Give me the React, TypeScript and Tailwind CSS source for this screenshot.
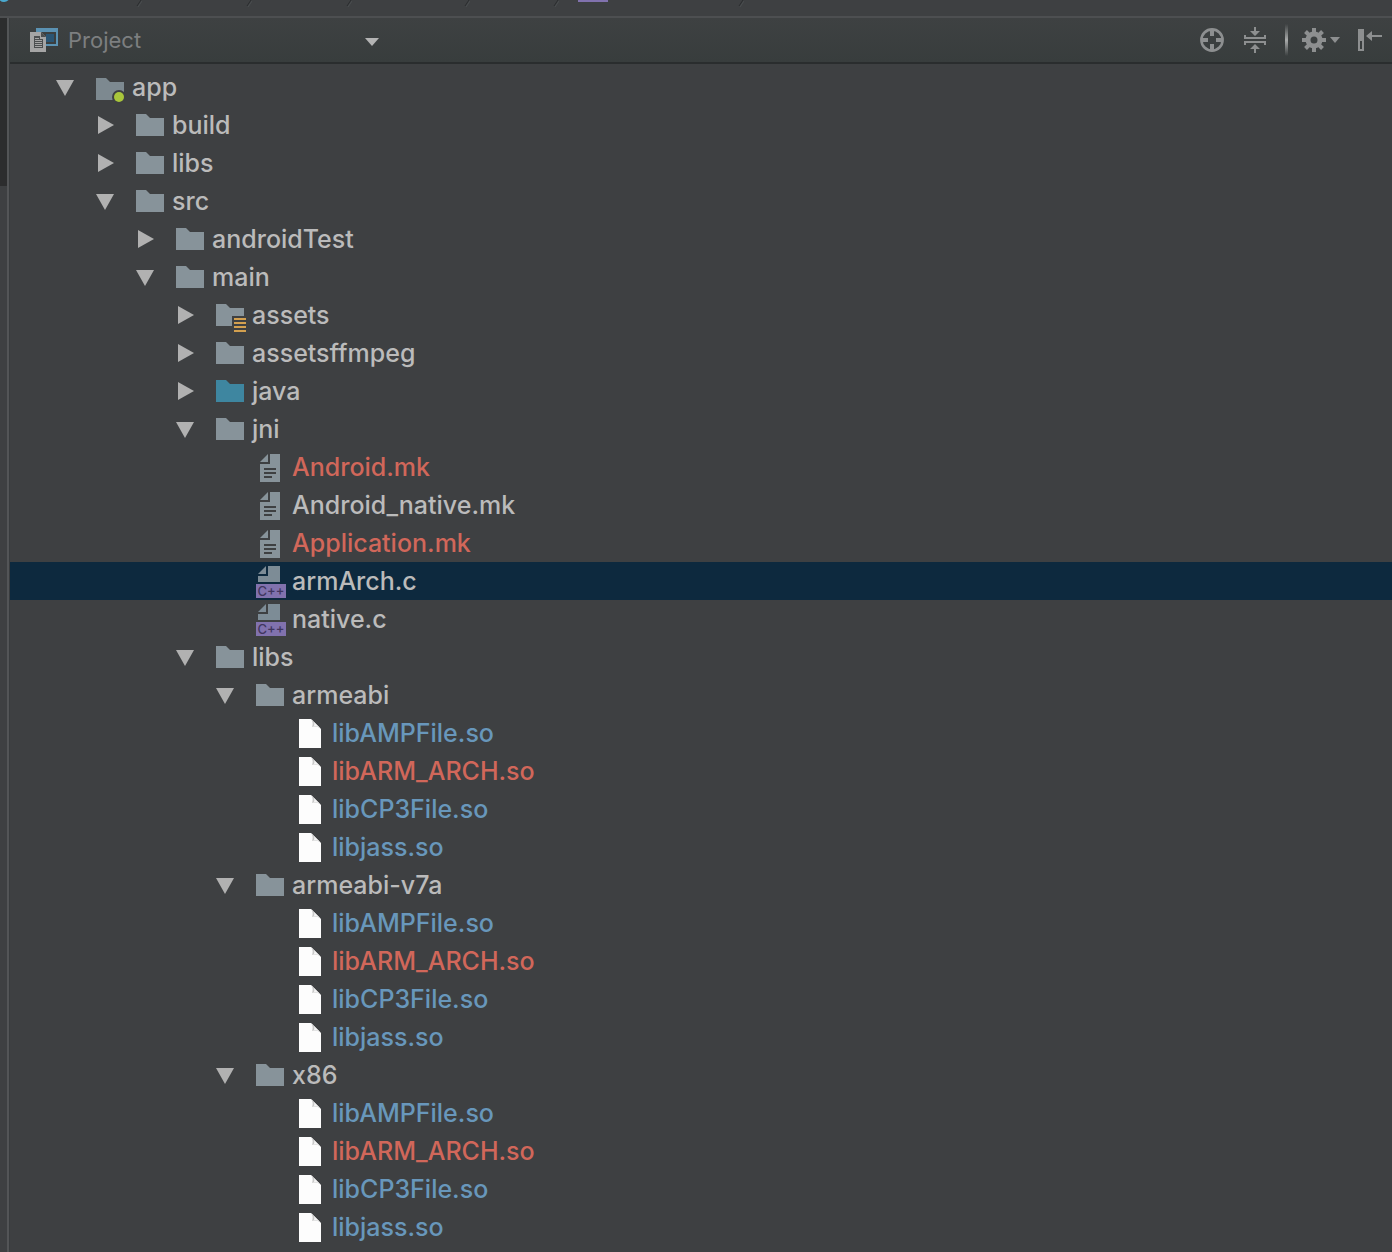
import { useState } from "react";
import clsx from "clsx";

type IconKind = "module" | "folder" | "assets" | "source" | "text" | "cpp" | "blank";
type Status = "normal" | "added" | "unversioned";

interface TreeItem {
	id: string;
	name: string;
	icon: IconKind;
	status?: Status;
	children?: TreeItem[];
}

const soFiles = (parent: string): TreeItem[] => [
	{ id: `${parent}/libAMPFile.so`, name: "libAMPFile.so", icon: "blank", status: "added" },
	{ id: `${parent}/libARM_ARCH.so`, name: "libARM_ARCH.so", icon: "blank", status: "unversioned" },
	{ id: `${parent}/libCP3File.so`, name: "libCP3File.so", icon: "blank", status: "added" },
	{ id: `${parent}/libjass.so`, name: "libjass.so", icon: "blank", status: "added" },
];

const project: TreeItem[] = [
	{
		id: "app", name: "app", icon: "module", children: [
			{ id: "build", name: "build", icon: "folder", children: [] },
			{ id: "libs", name: "libs", icon: "folder", children: [] },
			{
				id: "src", name: "src", icon: "folder", children: [
					{ id: "androidTest", name: "androidTest", icon: "folder", children: [] },
					{
						id: "main", name: "main", icon: "folder", children: [
							{ id: "assets", name: "assets", icon: "assets", children: [] },
							{ id: "assetsffmpeg", name: "assetsffmpeg", icon: "folder", children: [] },
							{ id: "java", name: "java", icon: "source", children: [] },
							{
								id: "jni", name: "jni", icon: "folder", children: [
									{ id: "Android.mk", name: "Android.mk", icon: "text", status: "unversioned" },
									{ id: "Android_native.mk", name: "Android_native.mk", icon: "text" },
									{ id: "Application.mk", name: "Application.mk", icon: "text", status: "unversioned" },
									{ id: "armArch.c", name: "armArch.c", icon: "cpp" },
									{ id: "native.c", name: "native.c", icon: "cpp" },
								],
							},
							{
								id: "main/libs", name: "libs", icon: "folder", children: [
									{ id: "armeabi", name: "armeabi", icon: "folder", children: soFiles("armeabi") },
									{ id: "armeabi-v7a", name: "armeabi-v7a", icon: "folder", children: soFiles("armeabi-v7a") },
									{ id: "x86", name: "x86", icon: "folder", children: soFiles("x86") },
								],
							},
						],
					},
				],
			},
		],
	},
];

const initiallyOpen = ["app", "src", "main", "jni", "main/libs", "armeabi", "armeabi-v7a", "x86"];

const statusColors: Record<Status, string> = {
	normal: "text-[#bbbbbb]",
	added: "text-[#6897bb]",
	unversioned: "text-[#d1675a]",
};

// Icons are drawn on the full row height
const ItemIcon = ({ kind }: { kind: IconKind }) => (
	<svg width="32" height="38" viewBox="0 0 32 38" className="shrink-0" aria-hidden="true">
		{kind === "folder" && <path d="M0 8h10l4 4h14v18H0z" fill="#87939a" />}
		{kind === "source" && <path d="M0 8h10l4 4h14v18H0z" fill="#3e86a0" />}
		{kind === "module" && (
			<>
				<path d="M0 10h10l4 4h14v18H0z" fill="#7d8990" />
				<circle cx="23" cy="29" r="7" fill="#3e4042" />
				<circle cx="23" cy="29" r="5" fill="#a9c63b" />
			</>
		)}
		{kind === "assets" && (
			<>
				<path d="M0 8h10l4 4h14v8H16v10H0z" fill="#87939a" />
				<path d="M18 22h12v2H18zM18 26h12v2H18zM18 30h12v2H18zM18 34h12v2H18z" fill="#d3a04f" />
			</>
		)}
		{kind === "text" && (
			<>
				<path d="M4 14l8-8v8zM14 6h10v28H4V16h10z" fill="#87939a" />
				<path d="M8 20h12v2H8zM8 24h12v2H8zM8 28h8v2H8z" fill="#3e4042" />
			</>
		)}
		{kind === "cpp" && (
			<>
				<path d="M2 12l8-8v8zM12 4h12v16H2v-6h10z" fill="#7d8c96" />
				<path d="M0 22h30v14H0z" fill="#8172ae" />
				<text x="15" y="34" textAnchor="middle" fill="#40365f" fontSize="13" fontWeight="500" fontFamily="Inter, sans-serif">C++</text>
			</>
		)}
		{kind === "blank" && (
			<>
				<path d="M3 5h12l10 10v19H3z" fill="#fdfdfd" />
				<path d="M15 5c2 3 2 5 1 8 4-1 7 0 9 2z" fill="#c9c9c9" />
				<path d="M15 5c3 2 4 4 3 7 3 0 5 1 7 3z" fill="#f4f4f4" />
			</>
		)}
	</svg>
);

const Arrow = ({ open }: { open: boolean }) => (
	<svg width="20" height="20" viewBox="0 0 20 20" fill="#b1b1b1" aria-hidden="true">
		<path d={open ? "M0 3h18L9 19z" : "M2 1l16 9-16 9z"} />
	</svg>
);

interface RowProps {
	item: TreeItem;
	depth: number;
	open: string[];
	selected: string;
	onToggle: (id: string) => void;
	onSelect: (id: string) => void;
}

const TreeRow = ({ item, depth, open, selected, onToggle, onSelect }: RowProps) => {
	const isOpen = open.includes(item.id);
	const isSelected = selected === item.id;

	return (
		<li role="treeitem" aria-expanded={item.children ? isOpen : undefined} aria-selected={isSelected}>
			<div
				className={clsx("flex h-[38px] items-center", isSelected && "bg-[#0d293e]")}
				style={{ paddingLeft: 46 + depth * 40 }}
			>
				<div className="mr-5 w-5 shrink-0">
					{item.children && (
						<button type="button" className="block" aria-label={`Toggle ${item.name}`} onClick={() => onToggle(item.id)}>
							<Arrow open={isOpen} />
						</button>
					)}
				</div>
				<button type="button" className="flex grow items-center gap-1 text-left" onClick={() => onSelect(item.id)}>
					<ItemIcon kind={item.icon} />
					<span className={clsx("whitespace-nowrap font-medium", statusColors[item.status ?? "normal"])}>{item.name}</span>
				</button>
			</div>
			{item.children && isOpen && (
				<ul role="group">
					{item.children.map((child) => (
						<TreeRow key={child.id} item={child} depth={depth + 1} open={open} selected={selected} onToggle={onToggle} onSelect={onSelect} />
					))}
				</ul>
			)}
		</li>
	);
};

const Slash = ({ className }: { className: string }) => (
	<svg width="6" height="8" viewBox="0 0 6 8" className={clsx("shrink-0", className)} aria-hidden="true">
		<path d="M5 0L1 6" stroke="#2b2d2e" strokeWidth="1" />
		<path d="M6 1L2 7" stroke="#4b4e50" strokeWidth="1" />
	</svg>
);

// Bottom edge of the navigation bar
const NavBar = () => (
	<div className="flex h-4 items-start overflow-hidden">
		<svg width="10" height="4" viewBox="0 0 10 4" className="shrink-0" aria-hidden="true">
			<circle cx="4" cy="-4" r="6" fill="#4aa9cf" />
		</svg>
		<Slash className="ml-[126px]" />
		<Slash className="ml-[104px]" />
		<Slash className="ml-[94px]" />
		<Slash className="ml-[112px]" />
		<Slash className="ml-[83px]" />
		<div className="ml-[19px] h-0.5 w-[30px] shrink-0 bg-[#8172ae]" />
		<Slash className="ml-[130px]" />
	</div>
);

const ToolWindowHeader = () => (
	<header className="flex h-[46px] items-center border-b-2 border-[#2a2d2e] bg-linear-to-b from-[#3e4142] to-[#383d3d] pr-2.5 pl-5">
		<svg width="28" height="24" viewBox="0 0 28 24" className="shrink-0" aria-hidden="true">
			<path d="M6 0h22v18H16v-2h10V4H6z" fill="#5b92b3" />
			<path d="M16 6h8v8h-8z" fill="#2b5573" />
			<path d="M0 4h11l5 5v15H0z" fill="#a5a5a5" />
			<path d="M11 4v5h5z" fill="#4c4f50" />
			<path d="M4 8h6v3h3v9H4z" fill="#4c4f50" />
			<path d="M5 10h4v1H5zM5 12h7v1H5zM5 14h7v1H5zM5 16h7v1H5zM5 18h7v1H5z" fill="#a5a5a5" />
		</svg>
		<div className="ml-2.5 flex items-center">
			<select aria-label="View" className="w-[312px] appearance-none bg-transparent text-[22px] leading-7 text-[#7d7f80] outline-none">
				<option>Project</option>
			</select>
			<svg width="14" height="12" viewBox="0 0 14 12" className="pointer-events-none -ml-[15px]" aria-hidden="true">
				<path d="M0 4h14l-7 8z" fill="#b4b4b4" />
			</svg>
		</div>

		<div className="ml-auto flex items-center text-[#8d8f90]">
			<button type="button" aria-label="Scroll from source">
				<svg width="24" height="24" viewBox="0 0 24 24" fill="none" stroke="currentColor">
					<circle cx="12" cy="12" r="10.6" strokeWidth="2.6" />
					<path d="M12 1v7M12 16v7M1 12h7M16 12h7" strokeWidth="4" />
				</svg>
			</button>
			<button type="button" aria-label="Collapse all" className="ml-5">
				<svg width="22" height="26" viewBox="0 0 22 26" fill="currentColor">
					<path d="M10 0h2v4h4l-5 5-5-5h4zM10 26h2v-4h4l-5-5-5 5h4z" />
					<path d="M0 8h2v2h18V8h2v4H0zM0 14h22v4h-2v-2H2v2H0z" />
				</svg>
			</button>
			<div className="ml-[19px] h-8 w-[3px] bg-linear-to-b from-transparent via-[#a9abab] to-transparent" />
			<button type="button" aria-label="Settings" className="ml-3.5 flex items-center gap-1">
				<svg width="24" height="24" viewBox="0 0 24 24" stroke="currentColor" fill="none">
					<circle cx="12" cy="12" r="6" strokeWidth="5" />
					<path d="M12 0v5M12 19v5M0 12h5M19 12h5M3.5 3.5l3.5 3.5M17 17l3.5 3.5M20.5 3.5L17 7M7 17l-3.5 3.5" strokeWidth="4" />
				</svg>
				<svg width="10" height="6" viewBox="0 0 10 6" fill="currentColor">
					<path d="M0 0h10L5 6z" />
				</svg>
			</button>
			<button type="button" aria-label="Hide" className="ml-[18px]">
				<svg width="24" height="22" viewBox="0 0 24 22" fill="currentColor">
					<path d="M0 0h6v22H0zM2 12v8h2v-8z" fillRule="evenodd" />
					<path d="M8 7l6-5v4h10v2H14v4z" />
				</svg>
			</button>
		</div>
	</header>
);

const App = () => {
	const [open, setOpen] = useState<string[]>(initiallyOpen);
	const [selected, setSelected] = useState("armArch.c");

	const handleToggle = (id: string) => {
		setOpen(open.includes(id) ? open.filter((o) => o !== id) : [...open, id]);
	};

	return (
		<div className="flex min-h-screen flex-col bg-[#3e4042] font-[Inter,sans-serif] text-[25px] leading-8">
			<NavBar />
			<div className="flex grow border-t-2 border-[#4d4f51]">
				{/* Side stripe, active tab on top */}
				<div className="w-[7px] shrink-0">
					<div className="h-[168px] bg-[#2c2d2e]" />
				</div>
				<main className="min-w-0 grow border-l-2 border-[#535557]">
					<div className="border-l border-[#393c3e]">
						<ToolWindowHeader />
						<ul role="tree" aria-label="Project" className="py-1">
							{project.map((item) => (
								<TreeRow key={item.id} item={item} depth={0} open={open} selected={selected} onToggle={handleToggle} onSelect={setSelected} />
							))}
						</ul>
					</div>
				</main>
			</div>
		</div>
	);
};

export default App;
